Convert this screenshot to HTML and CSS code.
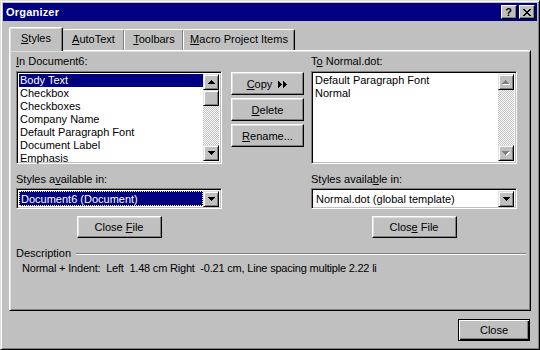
FILE: index.html
```html
<!DOCTYPE html>
<html lang="en">
<head>
  <meta charset="UTF-8" />
  <title>Organizer</title>
  <link rel="stylesheet" href="styles.css">
</head>
<body>

  <div class="window">
    <div class="titlebar">
      <span class="title">Organizer</span>
      <div class="caption-buttons">
        <span class="cbtn cbtn-help">?</span>
        <span class="cbtn cbtn-close">
          <svg width="8" height="7" viewBox="0 0 8 7"><path d="M0 0h2v1h1v1h2V1h1V0h2v1H7v1H6v1H5v1h1v1h1v1h1v1H6V6H5V5H3v1H2v1H0V6h1V5h1V4h1V3H2V2H1V1H0z" fill="#000"/></svg>
        </span>
      </div>
    </div>

    <div class="dialog">
      <div class="tabs">
        <div class="tab tab-active" style="width: 54px;"><span><u>S</u>tyles</span></div>
        <div class="tab" style="width: 62px;"><span><u>A</u>utoText</span></div>
        <div class="tab" style="width: 60px;"><span><u>T</u>oolbars</span></div>
        <div class="tab" style="width: 112px;"><span><u>M</u>acro Project Items</span></div>
      </div>

      <div class="panel">
        <div class="lists">
          <div class="col">
            <div class="label"><u>I</u>n Document6:</div>
            <div class="listbox">
              <ul class="items">
                <li class="selected">Body Text</li>
                <li>Checkbox</li>
                <li>Checkboxes</li>
                <li>Company Name</li>
                <li>Default Paragraph Font</li>
                <li>Document Label</li>
                <li>Emphasis</li>
              </ul>
              <div class="scrollbar">
                <span class="sbtn"><svg width="7" height="4" viewBox="0 0 7 4"><path d="M3 0h1v1h1v1h1v1h1v1H0V3h1V2h1V1h1z" fill="#000"/></svg></span>
                <span class="thumb"></span>
                <span class="track"></span>
                <span class="sbtn"><svg width="7" height="4" viewBox="0 0 7 4"><path d="M0 0h7v1H6v1H5v1H4v1H3V3H2V2H1V1H0z" fill="#000"/></svg></span>
              </div>
            </div>
          </div>

          <div class="actions">
            <button class="btn"><span><u>C</u>opy</span><svg class="copy-arrows" width="10" height="7" viewBox="0 0 10 7"><path d="M0 0h1v1h1v1h1v1h1v1H3v1H2v1H1v1H0zM5 0h1v1h1v1h1v1h1v1H8v1H7v1H6v1H5z" fill="#000"/></svg></button>
            <button class="btn"><span><u>D</u>elete</span></button>
            <button class="btn"><span><u>R</u>ename...</span></button>
          </div>

          <div class="col">
            <div class="label">T<u>o</u> Normal.dot:</div>
            <div class="listbox">
              <ul class="items">
                <li>Default Paragraph Font</li>
                <li>Normal</li>
              </ul>
              <div class="scrollbar">
                <span class="sbtn"><svg width="8" height="5" viewBox="0 0 8 5"><path d="M4 1h1v1h1v1h1v1H8v1H1V4h1V3h1V2h1z" fill="#fff"/><path d="M3 0h1v1h1v1h1v1h1v1H0V3h1V2h1V1h1z" fill="#808080"/></svg></span>
                <span class="track"></span>
                <span class="sbtn"><svg width="8" height="5" viewBox="0 0 8 5"><path d="M1 1h7v1H7v1H6v1H5v1H4V4H3V3H2V2H1z" fill="#fff"/><path d="M0 0h7v1H6v1H5v1H4v1H3V3H2V2H1V1H0z" fill="#808080"/></svg></span>
              </div>
            </div>
          </div>
        </div>

        <div class="sources">
          <div class="col">
            <div class="label">Styles a<u>v</u>ailable in:</div>
            <div class="combo">
              <div class="combo-value combo-focus"><span>Document6 (Document)</span></div>
              <span class="sbtn"><svg width="7" height="4" viewBox="0 0 7 4"><path d="M0 0h7v1H6v1H5v1H4v1H3V3H2V2H1V1H0z" fill="#000"/></svg></span>
            </div>
            <button class="btn btn-file"><span>Close <u>F</u>ile</span></button>
          </div>
          <div class="col">
            <div class="label">Styles availa<u>b</u>le in:</div>
            <div class="combo">
              <div class="combo-value"><span>Normal.dot (global template)</span></div>
              <span class="sbtn"><svg width="7" height="4" viewBox="0 0 7 4"><path d="M0 0h7v1H6v1H5v1H4v1H3V3H2V2H1V1H0z" fill="#000"/></svg></span>
            </div>
            <button class="btn btn-file"><span>Clos<u>e</u> File</span></button>
          </div>
        </div>

        <div class="description">
          <div class="desc-head">
            <span>Description</span>
            <span class="rule"></span>
          </div>
          <p class="desc-text">Normal + Indent:&nbsp; Left&nbsp; 1.48 cm Right&nbsp; -0.21 cm, Line spacing multiple 2.22 li</p>
        </div>
      </div>

      <div class="footer">
        <button class="btn btn-default"><span>Close</span></button>
      </div>
    </div>
  </div>

</body>
</html>
```

FILE: styles.css
```css
* {
  box-sizing: border-box;
}

body {
  margin: 0;
  font-family: 'Liberation Sans', Arial, sans-serif;
  font-size: 11px;
  color: #000;
  background: #c0c0c0;
}

u {
  text-decoration: underline;
  text-underline-offset: 1px;
}

.window {
  width: 540px;
  height: 350px;
  padding: 2px;
  background: #c0c0c0;
  border: 1px solid;
  border-color: #dfdfdf #000 #000 #dfdfdf;
  box-shadow: inset 1px 1px #fff, inset -1px -1px #808080;
}

/* title bar */

.titlebar {
  height: 18px;
  display: flex;
  align-items: center;
  justify-content: space-between;
  padding: 0 2px 0 3px;
  background: #000080;
}

.title {
  color: #fff;
  font-weight: bold;
  font-size: 11px;
  letter-spacing: 0.2px;
}

.caption-buttons {
  display: flex;
  gap: 2px;
}

.cbtn {
  width: 16px;
  height: 14px;
  display: flex;
  align-items: center;
  justify-content: center;
  background: #c0c0c0;
  border: 1px solid;
  border-color: #fff #000 #000 #fff;
  box-shadow: inset -1px -1px #808080;
  font-weight: bold;
  font-size: 11px;
  line-height: 1;
}

.cbtn-help {
  padding-right: 1px;
}

/* dialog body */

.dialog {
  padding: 6px 6px 0 6px;
}

.tabs {
  display: flex;
  align-items: flex-end;
  height: 23px;
  position: relative;
  z-index: 1;
}

.tab {
  height: 21px;
  display: flex;
  align-items: center;
  justify-content: center;
  padding-bottom: 2px;
  background: #c0c0c0;
  border: 1px solid;
  border-bottom: none;
  border-color: #fff #000 #000 #fff;
  border-radius: 2px 2px 0 0;
  box-shadow: inset -1px 0 #808080;
  margin-left: -1px;
  white-space: nowrap;
}

.tab-active {
  height: 24px;
  margin-left: 0;
  margin-bottom: -1px;
  padding-bottom: 3px;
  border-color: #fff #000 #000 #fff;
  box-shadow: inset -1px 0 #808080, inset 1px 1px #dfdfdf;
}

.tab-active + .tab {
  border-left: none;
  margin-left: 0;
}

.panel {
  height: 261px;
  padding: 4px 6px 0 6px;
  border: 1px solid;
  border-color: #fff #000 #000 #fff;
  box-shadow: inset 1px 1px #dfdfdf, inset -1px -1px #808080;
}

.label {
  height: 13px;
  line-height: 13px;
  white-space: nowrap;
}

/* list row */

.lists {
  display: flex;
}

.lists .col {
  width: 206px;
}

.lists .label {
  margin-bottom: 3px;
}

.listbox {
  height: 93px;
  display: flex;
  background: #fff;
  border: 1px solid;
  border-color: #808080 #fff #fff #808080;
  box-shadow: inset 1px 1px #000, inset -1px -1px #c0c0c0;
  padding: 2px;
}

.items {
  flex: 1;
  list-style: none;
  margin: 0;
  padding: 0;
}

.items li {
  height: 13px;
  line-height: 13px;
  padding-left: 1px;
  white-space: nowrap;
}

.items li.selected {
  background: #000080;
  color: #fff;
}

.scrollbar {
  width: 16px;
  display: flex;
  flex-direction: column;
}

.sbtn {
  width: 16px;
  height: 16px;
  flex: none;
  display: flex;
  align-items: center;
  justify-content: center;
  background: #c0c0c0;
  border: 1px solid;
  border-color: #dfdfdf #000 #000 #dfdfdf;
  box-shadow: inset 1px 1px #fff, inset -1px -1px #808080;
}

.thumb {
  height: 16px;
  flex: none;
  background: #c0c0c0;
  border: 1px solid;
  border-color: #dfdfdf #000 #000 #dfdfdf;
  box-shadow: inset 1px 1px #fff, inset -1px -1px #808080;
}

.track {
  flex: 1;
  background-image: conic-gradient(#fff 25%, #c0c0c0 0 50%, #fff 0 75%, #c0c0c0 0);
  background-size: 2px 2px;
}

.actions {
  width: 73px;
  margin: 17px 7px 0 9px;
  display: flex;
  flex-direction: column;
  gap: 3px;
}

/* buttons */

.btn {
  height: 23px;
  padding: 0;
  font-family: inherit;
  font-size: 11px;
  color: #000;
  background: #c0c0c0;
  border: 1px solid;
  border-color: #fff #000 #000 #fff;
  box-shadow: inset -1px -1px #808080, inset 1px 1px #dfdfdf;
  display: flex;
  align-items: center;
  justify-content: center;
  gap: 6px;
  white-space: nowrap;
}

.copy-arrows {
  margin-top: 1px;
}

/* combo row */

.sources {
  display: flex;
  gap: 89px;
  margin-top: 9px;
}

.sources .col {
  width: 206px;
  display: flex;
  flex-direction: column;
  align-items: center;
}

.sources .label {
  align-self: stretch;
  margin-bottom: 2px;
}

.combo {
  width: 206px;
  height: 21px;
  display: flex;
  background: #fff;
  border: 1px solid;
  border-color: #808080 #fff #fff #808080;
  box-shadow: inset 1px 1px #000, inset -1px -1px #c0c0c0;
  padding: 2px;
}

.combo-value {
  flex: 1;
  display: flex;
  align-items: center;
  padding: 1px;
  white-space: nowrap;
}

.combo-value span {
  padding-left: 1px;
}

.combo-focus {
  background: #000080;
  color: #fff;
  outline: 1px dotted #ffff80;
  outline-offset: -1px;
}

.btn-file {
  width: 85px;
  height: 22px;
  margin-top: 7px;
}

/* description */

.description {
  margin-top: 9px;
}

.desc-head {
  height: 13px;
  display: flex;
  align-items: center;
  gap: 5px;
  line-height: 13px;
}

.rule {
  flex: 1;
  height: 2px;
  margin-right: -2px;
  border-top: 1px solid #808080;
  border-bottom: 1px solid #fff;
}

.desc-text {
  margin: 2px 0 0 0;
  padding-left: 6px;
  height: 13px;
  line-height: 13px;
  white-space: nowrap;
  letter-spacing: -0.2px;
}

/* footer */

.footer {
  display: flex;
  justify-content: flex-end;
  padding: 8px 1px 0 0;
}

.btn-default {
  width: 72px;
  height: 22px;
  border-color: #000;
  box-shadow: inset 1px 1px #fff, inset -1px -1px #000, inset -2px -2px #808080;
}
```
